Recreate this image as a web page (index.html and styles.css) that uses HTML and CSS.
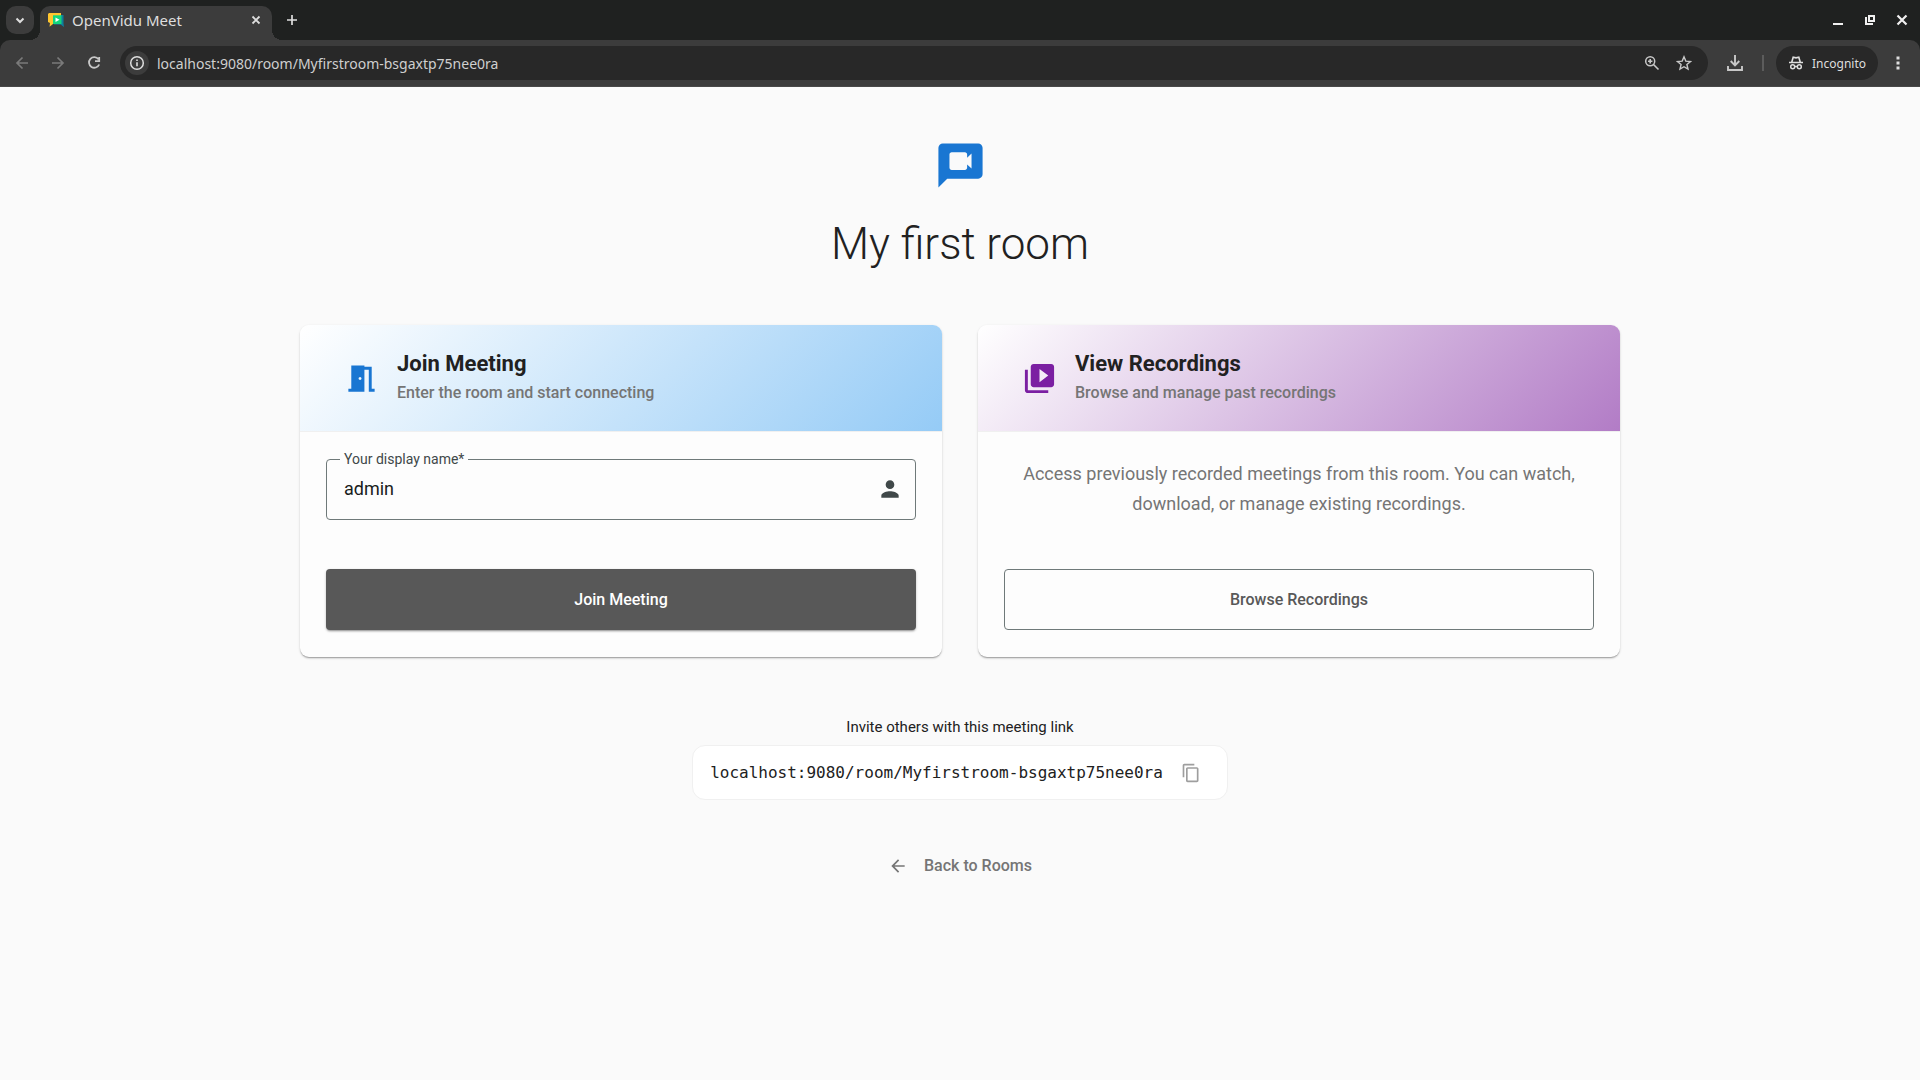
FILE: index.html
```html
<!DOCTYPE html>
<html lang="en">
<head>
<meta charset="utf-8">
<meta name="viewport" content="width=device-width, initial-scale=1">
<title>OpenVidu Meet</title>
<link rel="stylesheet" href="styles.css">
</head>
<body>
<div class="browser">
  <div class="tabstrip">
    <button class="tab-search" type="button" aria-label="Search tabs">
      <svg width="12" height="12" viewBox="0 0 12 12"><path d="M2.500 4.500 6 8l3.500-3.500" fill="none" stroke="currentColor" stroke-width="2"/></svg>
    </button>
    <div class="tab">
      <svg class="favicon" width="16" height="16" viewBox="0 0 16 16"><path d="M6 3h9.500v8.500L16 15l-3.500-2.500H6z" fill="#0f7f9d"/><path d="M1 1h12v2.500l-8 8.500-3.500 2.800.5-3.800-2-1V2z" fill="#ffc62e"/><path d="M5 3.300h8.500V12H5z" fill="#12d67c"/><path d="m7.500 5.500 4 2.300-4 2.300z" fill="#fff"/></svg>
      <span class="tab-title">OpenVidu Meet</span>
      <button class="tab-close" type="button" aria-label="Close tab">
        <svg width="10" height="10" viewBox="0 0 10 10"><path d="m1.500 1.500 7 7m0-7-7 7" stroke="currentColor" stroke-width="1.800"/></svg>
      </button>
    </div>
    <button class="new-tab" type="button" aria-label="New tab">
      <svg width="12" height="12" viewBox="0 0 12 12"><path d="M6 1v10M1 6h10" stroke="currentColor" stroke-width="1.700"/></svg>
    </button>
    <div class="window-controls">
      <button type="button" aria-label="Minimize"><svg width="12" height="12" viewBox="0 0 12 12"><path d="M1 10h10" stroke="currentColor" stroke-width="2"/></svg></button>
      <button type="button" aria-label="Restore"><svg width="12" height="12" viewBox="0 0 12 12"><path d="M5 2h5v5H5zM2 3v7h7" fill="none" stroke="currentColor" stroke-width="2"/></svg></button>
      <button type="button" aria-label="Close"><svg width="12" height="12" viewBox="0 0 12 12"><path d="m1.500 1.500 9 9m0-9-9 9" stroke="currentColor" stroke-width="2.200"/></svg></button>
    </div>
  </div>
  <div class="toolbar">
    <div class="nav">
      <button class="nav-button nav-off" type="button" aria-label="Back"><svg width="16" height="16" viewBox="0 0 16 16"><path d="M14 8H3m5.500-5.500L3 8l5.500 5.500" fill="none" stroke="currentColor" stroke-width="1.700"/></svg></button>
      <button class="nav-button nav-off" type="button" aria-label="Forward"><svg width="16" height="16" viewBox="0 0 16 16"><path d="M2 8h11M7.500 2.500 13 8l-5.500 5.500" fill="none" stroke="currentColor" stroke-width="1.700"/></svg></button>
      <button class="nav-button" type="button" aria-label="Reload"><svg width="16" height="16" viewBox="0 0 16 16"><path d="M12.500 4.200A5.300 5.300 0 1 0 13.200 9.500M13.200 2v4.200H9" fill="none" stroke="currentColor" stroke-width="1.800"/></svg></button>
    </div>
    <div class="omnibox">
      <button class="site-info" type="button" aria-label="View site information"><svg width="16" height="16" viewBox="0 0 16 16"><circle cx="8" cy="8" r="6.300" fill="none" stroke="currentColor" stroke-width="1.500"/><path d="M8 7.200v4M8 4.400V6" stroke="currentColor" stroke-width="1.600"/></svg></button>
      <input class="address" type="text" aria-label="Address" value="localhost:9080/room/Myfirstroom-bsgaxtp75nee0ra">
      <button class="omni-action" type="button" aria-label="Zoom"><svg width="16" height="16" viewBox="0 0 16 16"><circle cx="6.200" cy="6.200" r="4.500" fill="none" stroke="currentColor" stroke-width="1.500"/><path d="m9.500 9.500 5 5M6.200 4v4.400M4 6.200h4.400" stroke="currentColor" stroke-width="1.600"/></svg></button>
      <button class="omni-action" type="button" aria-label="Bookmark this tab"><svg width="16" height="16" viewBox="0 0 16 16"><path d="m8 1.800 1.800 4.300 4.700.4-3.600 3 1.100 4.600L8 11.700l-4 2.400 1.100-4.600-3.600-3 4.700-.4z" fill="none" stroke="currentColor" stroke-width="1.400"/></svg></button>
    </div>
    <button class="nav-button" type="button" aria-label="Downloads"><svg width="18" height="18" viewBox="0 0 18 18"><path d="M9 1v10M4.700 7 9 11.300 13.300 7M2 12v4h14v-4" fill="none" stroke="currentColor" stroke-width="1.900"/></svg></button>
    <div class="profile">
      <button class="incognito" type="button">
        <svg width="16" height="16" viewBox="0 0 16 16"><path d="M1 7.500h14M3.800 7l1.400-4.800 2.800.7 2.800-.7L12.200 7" fill="none" stroke="currentColor" stroke-width="1.600"/><circle cx="4.700" cy="11.700" r="2" fill="none" stroke="currentColor" stroke-width="1.500"/><circle cx="11.300" cy="11.700" r="2" fill="none" stroke="currentColor" stroke-width="1.500"/><path d="M6.500 11.500h3" stroke="currentColor" stroke-width="1.400"/></svg>
        <span>Incognito</span>
      </button>
    </div>
    <button class="menu" type="button" aria-label="Menu"><svg width="4" height="16" viewBox="0 0 4 16"><path d="M.500 1.500h3v3h-3zM.500 6.500h3v3h-3zM.500 11.500h3v3h-3z" fill="currentColor"/></svg></button>
  </div>
</div>

<main class="page">
  <header class="room-header">
    <svg class="room-icon" viewBox="0 0 24 24"><path fill="#1976d2" d="M20 2H4c-1.100 0-2 .9-2 2v18l4-4h14c1.100 0 2-.9 2-2V4c0-1.100-.9-2-2-2z"/><path fill="#fafafa" d="M15 8.500V7c0-.550-.450-1-1-1H8c-.550 0-1 .450-1 1v6c0 .550.450 1 1 1h6c.550 0 1-.450 1-1v-1.500l2 1.900V6.600z"/></svg>
    <h1 class="room-title">My first room</h1>
  </header>

  <div class="cards">
    <section class="card">
      <div class="card-header card-header-blue">
        <svg class="card-icon" viewBox="0 -960 960 960" fill="#1976d2"><path d="M120-120v-80h80v-640h360v40h200v600h80v80H680v-600H560v600H120Zm320-320q17 0 28.500-11.500T480-480q0-17-11.500-28.500T440-520q-17 0-28.500 11.500T400-480q0 17 11.500 28.500T440-440Z"/></svg>
        <div>
          <h2 class="card-title">Join Meeting</h2>
          <p class="card-subtitle">Enter the room and start connecting</p>
        </div>
      </div>
      <form class="card-body">
        <div class="field">
          <label class="field-label" for="display-name">Your display name*</label>
          <input class="field-input" id="display-name" type="text" value="admin">
          <svg class="field-icon" viewBox="0 0 24 24" fill="#404849"><path d="M12 12c2.210 0 4-1.790 4-4s-1.790-4-4-4-4 1.790-4 4 1.790 4 4 4zm0 2c-2.670 0-8 1.340-8 4v2h16v-2c0-2.660-5.330-4-8-4z"/></svg>
        </div>
        <button class="action action-filled" type="button">Join Meeting</button>
      </form>
    </section>

    <section class="card">
      <div class="card-header card-header-purple">
        <svg class="card-icon" viewBox="0 0 24 24" fill="#7b1fa2"><path d="M4 6H2v14c0 1.100.9 2 2 2h14v-2H4V6zm16-4H8c-1.100 0-2 .9-2 2v12c0 1.100.9 2 2 2h12c1.100 0 2-.9 2-2V4c0-1.100-.9-2-2-2zm-8 12.500v-9l6 4.500-6 4.500z"/></svg>
        <div>
          <h2 class="card-title">View Recordings</h2>
          <p class="card-subtitle">Browse and manage past recordings</p>
        </div>
      </div>
      <div class="card-body">
        <p class="description">Access previously recorded meetings from this room. You can watch, download, or manage existing recordings.</p>
        <button class="action action-outlined" type="button">Browse Recordings</button>
      </div>
    </section>
  </div>

  <section class="invite">
    <p class="invite-text">Invite others with this meeting link</p>
    <div class="invite-box">
      <code class="invite-link">localhost:9080/room/Myfirstroom-bsgaxtp75nee0ra</code>
      <button class="copy" type="button" aria-label="Copy link"><svg width="20" height="20" viewBox="0 0 24 24" fill="currentColor"><path d="M16 1H4c-1.100 0-2 .9-2 2v14h2V3h12V1zm3 4H8c-1.100 0-2 .9-2 2v14c0 1.100.9 2 2 2h11c1.100 0 2-.9 2-2V7c0-1.100-.9-2-2-2zm0 16H8V7h11v14z"/></svg></button>
    </div>
  </section>

  <a class="back" href="#rooms">
    <svg width="20" height="20" viewBox="0 0 24 24" fill="currentColor"><path d="M20 11H7.830l5.590-5.590L12 4l-8 8 8 8 1.410-1.410L7.830 13H20v-2z"/></svg>
    <span>Back to Rooms</span>
  </a>
</main>
</body>
</html>
```

FILE: styles.css
```css
*,
*::before,
*::after {
  box-sizing: border-box;
}

body {
  margin: 0;
  min-height: 100vh;
  background: #fafafa;
  color: #212121;
  font-family: Roboto, "Liberation Sans", sans-serif;
}

button,
input {
  margin: 0;
  padding: 0;
  border: 0;
  background: none;
  color: inherit;
  font: inherit;
}

h1,
h2,
p {
  margin: 0;
}

svg {
  display: block;
  flex: none;
}

/* Browser frame */

.browser {
  background: #1f2120;
  color: #dedede;
  font-family: "Noto Sans", "Open Sans", sans-serif;
  font-size: 14px;
}

.tabstrip {
  display: flex;
  align-items: center;
  height: 40px;
  padding: 0 12px 0 6px;
}

.tab-search {
  display: grid;
  place-items: center;
  width: 28px;
  height: 28px;
  margin-right: 6px;
  border-radius: 10px;
  background: #3c3c3c;
}

.tab {
  position: relative;
  display: flex;
  align-items: center;
  gap: 8px;
  align-self: flex-end;
  width: 232px;
  height: 34px;
  padding: 0 8px 6px;
  border-radius: 10px 10px 0 0;
  background: #3c3c3c;
}

.tab::before,
.tab::after {
  content: "";
  position: absolute;
  bottom: 0;
  width: 10px;
  height: 10px;
}

.tab::before {
  right: 100%;
  background: radial-gradient(circle at 0 0, transparent 10px, #3c3c3c 10px);
}

.tab::after {
  left: 100%;
  background: radial-gradient(circle at 100% 0, transparent 10px, #3c3c3c 10px);
}

.tab-title {
  flex: 1;
  font-size: 15px;
  line-height: 20px;
  white-space: nowrap;
}

.tab-close,
.new-tab {
  display: grid;
  place-items: center;
  width: 16px;
  height: 16px;
}

.new-tab {
  margin-left: 12px;
}

.window-controls {
  display: flex;
  gap: 20px;
  margin-left: auto;
  color: #f0f0f0;
}

.toolbar {
  display: flex;
  align-items: center;
  gap: 18px;
  height: 47px;
  padding: 0 20px 0 14px;
  border-bottom: 1px solid #484848;
  border-radius: 10px 10px 0 0;
  background: #3c3c3c;
}

.nav {
  display: flex;
  gap: 20px;
}

.nav-button {
  color: #c8c8c8;
}

.nav-off {
  color: #7a7a7a;
}

.omnibox {
  display: flex;
  flex: 1;
  align-items: center;
  height: 34px;
  padding: 0 16px 0 5px;
  gap: 16px;
  border-radius: 17px;
  background: #282828;
}

.site-info {
  display: grid;
  place-items: center;
  width: 24px;
  height: 24px;
  margin-right: -8px;
  border-radius: 12px;
  background: #3c3c3c;
}

.address {
  flex: 1;
  min-width: 0;
  color: #cfcfcf;
}

.omni-action {
  color: #c8c8c8;
}

.profile {
  display: flex;
  align-items: center;
  gap: 12px;
}

.profile::before {
  content: "";
  width: 2px;
  height: 16px;
  background: #5c5c5c;
}

.incognito {
  display: flex;
  align-items: center;
  gap: 8px;
  height: 34px;
  padding: 0 12px;
  border-radius: 17px;
  background: #282828;
  font-size: 12px;
}

/* Meeting room page */

.page {
  display: flex;
  flex-direction: column;
  align-items: center;
  padding: 52px 32px 32px;
}

.room-header {
  display: flex;
  flex-direction: column;
  align-items: center;
  gap: 24px;
}

.room-icon {
  width: 53px;
  height: 53px;
}

.room-title {
  font-size: 44px;
  font-weight: 300;
  line-height: 56px;
}

.cards {
  display: grid;
  grid-template-columns: repeat(auto-fit, minmax(360px, 1fr));
  gap: 36px;
  width: 100%;
  max-width: 1320px;
  margin-top: 53px;
}

.card {
  display: flex;
  flex-direction: column;
  overflow: hidden;
  border-radius: 9px;
  background: #fdfdfd;
  box-shadow: 0 2px 2px -1px rgba(0, 0, 0, 0.2), 0 1px 1px rgba(0, 0, 0, 0.14), 0 1px 3px rgba(0, 0, 0, 0.12);
}

.card-header {
  display: flex;
  align-items: center;
  gap: 18px;
  height: 107px;
  padding: 0 44px;
  border-bottom: 1px solid #f0f0f0;
}

.card-header-blue {
  background: linear-gradient(135deg, #fff, #95cbf6);
}

.card-header-purple {
  background: linear-gradient(135deg, #fff, #b27cc6);
}

.card-icon {
  width: 35px;
  height: 35px;
}

.card-title {
  font-size: 22px;
  font-weight: 700;
  line-height: 30px;
}

.card-subtitle {
  color: #757575;
  font-size: 16px;
  font-weight: 500;
  line-height: 28px;
}

.card-body {
  display: flex;
  flex: 1;
  flex-direction: column;
  justify-content: space-between;
  gap: 49px;
  padding: 27px 26px;
}

.field {
  position: relative;
  display: flex;
  align-items: center;
  height: 61px;
  padding: 0 12px 2px 17px;
  border: 1px solid #6f7979;
  border-radius: 4px;
}

.field-label {
  position: absolute;
  top: -9px;
  left: 13px;
  padding: 0 4px;
  background: #fdfdfd;
  color: #404849;
  font-size: 14px;
  line-height: 16px;
}

.field-input {
  flex: 1;
  min-width: 0;
  color: #191c1c;
  font-size: 18px;
}

.field-icon {
  width: 26px;
  height: 26px;
}

.action {
  height: 61px;
  border-radius: 4px;
  font-size: 16px;
  font-weight: 500;
}

.action-filled {
  background: #585858;
  box-shadow: 0 2px 2px -1px rgba(0, 0, 0, 0.3), 0 1px 3px rgba(0, 0, 0, 0.2);
  color: #fff;
}

.action-outlined {
  border: 1px solid #6f7979;
  color: #585858;
}

.description {
  color: #757575;
  font-size: 18px;
  line-height: 30px;
  text-align: center;
}

.invite {
  display: flex;
  flex-direction: column;
  align-items: center;
  gap: 8px;
  margin-top: 60px;
}

.invite-text {
  font-size: 15px;
  line-height: 20px;
}

.invite-box {
  display: flex;
  align-items: center;
  gap: 18px;
  height: 55px;
  padding: 0 26px 0 17px;
  border: 1px solid #f0f0f0;
  border-radius: 13px;
  background: #fff;
}

.invite-link {
  font-family: "DejaVu Sans Mono", monospace;
  font-size: 16px;
}

.copy {
  color: #9e9e9e;
}

.back {
  display: flex;
  align-items: center;
  gap: 16px;
  margin-top: 56px;
  color: #757575;
  font-size: 16px;
  font-weight: 500;
  line-height: 20px;
  text-decoration: none;
}
```
